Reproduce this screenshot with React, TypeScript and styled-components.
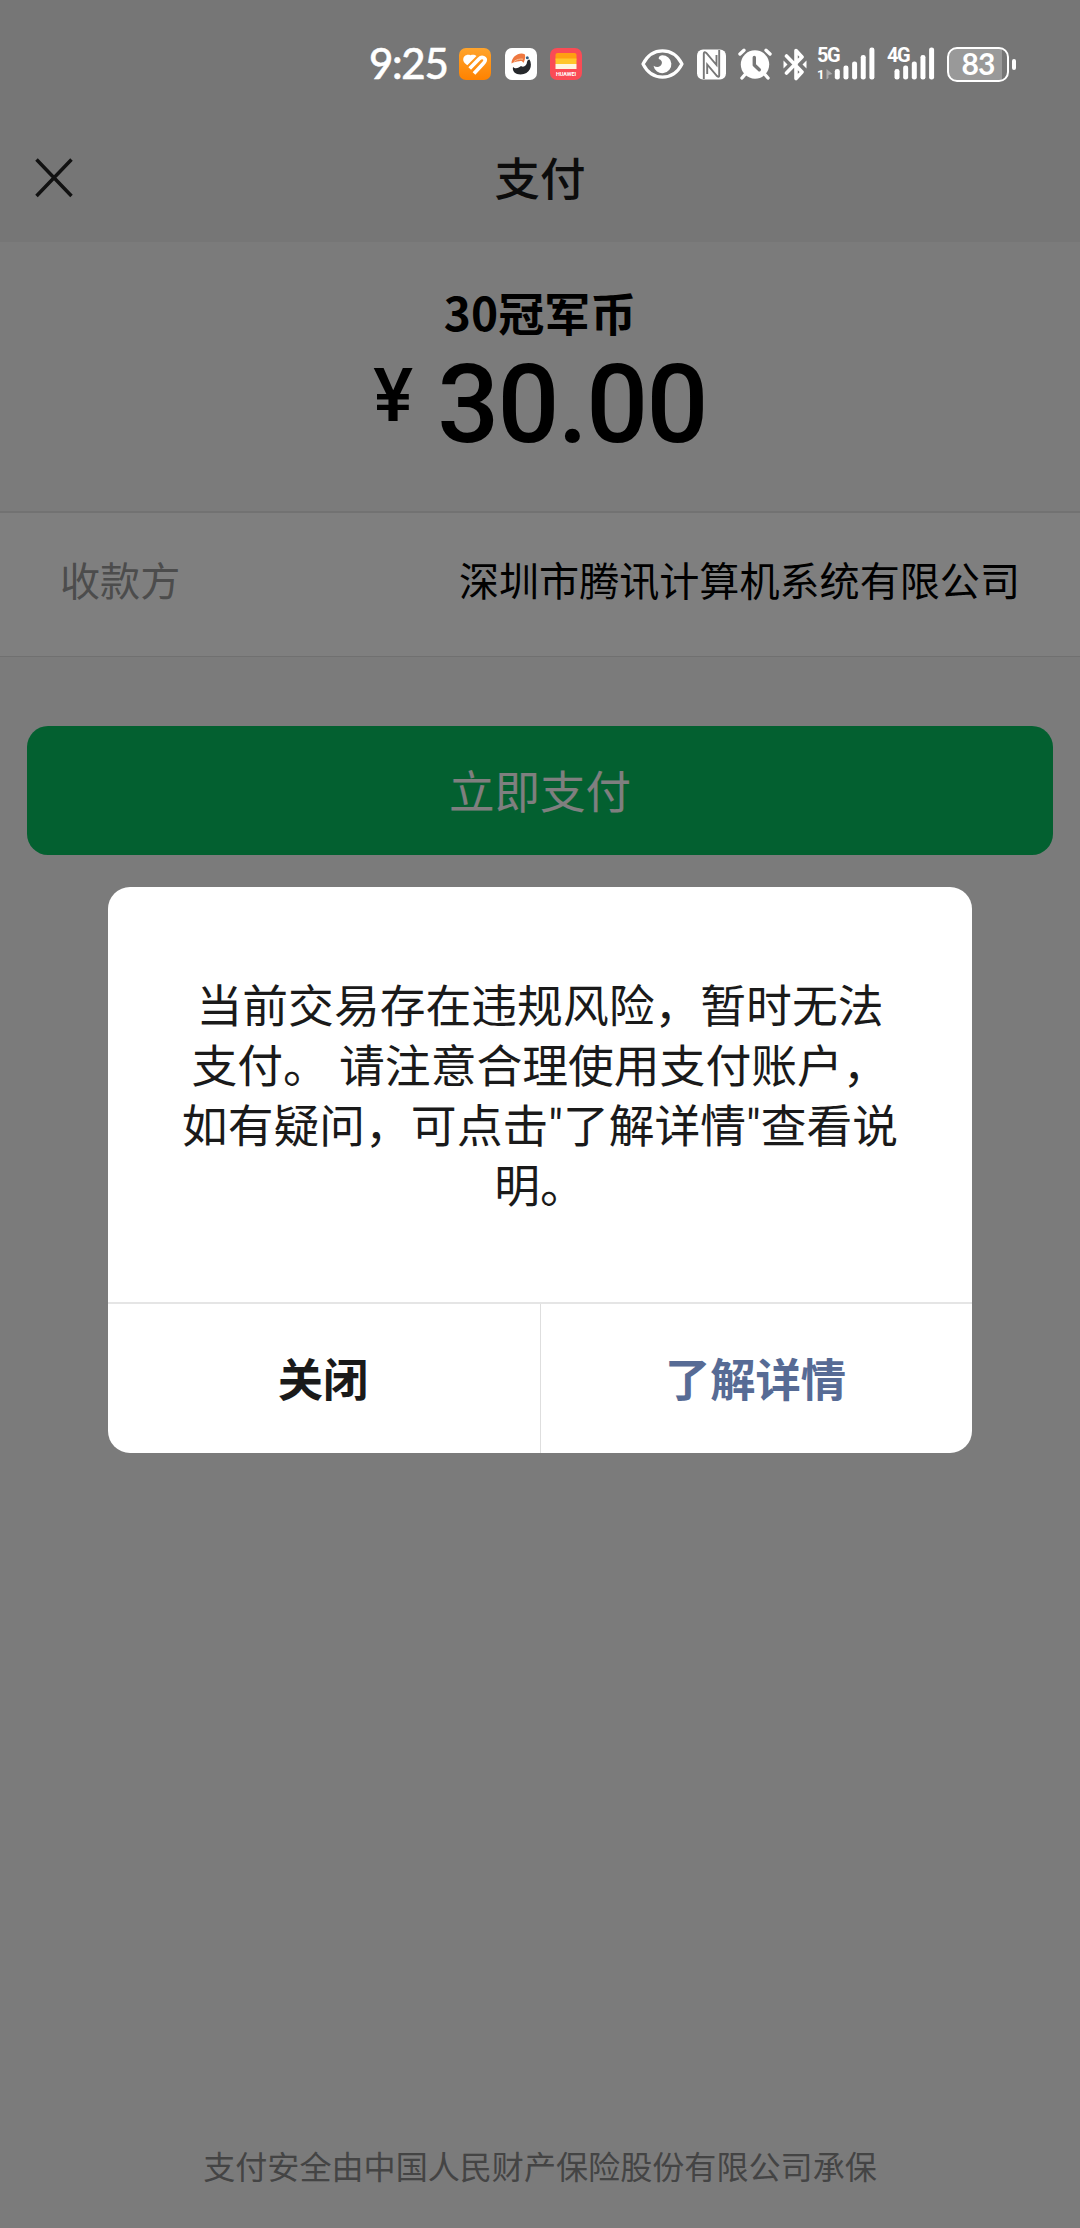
import React from 'react';
import styled, { createGlobalStyle } from 'styled-components';

const GlobalStyle = createGlobalStyle`
  * { box-sizing: border-box; }
  body { margin: 0; font-family: "Noto Sans CJK SC", "Liberation Sans", sans-serif; }
  button { font-family: inherit; border: 0; padding: 0; background: none; cursor: pointer; }
`;

const Screen = styled.div`
  position: relative;
  display: flex;
  flex-direction: column;
  width: 1080px;
  height: 2228px;
  overflow: hidden;
  background: #f7f7f7;
`;

const StatusBar = styled.div`
  position: relative;
  z-index: 2;
  display: flex;
  align-items: center;
  height: 128px;
  padding-left: 369px;
  color: #fff;
  svg { display: block; flex: none; }
`;

const Clock = styled.span`
  width: 90px;
  padding-bottom: 2px;
  font-family: Lato, Roboto, sans-serif;
  font-size: 42px;
  font-weight: 500;
  line-height: 48px;
  letter-spacing: -1.3px;
  -webkit-text-stroke: 0.5px #fff;
`;

const AppIcons = styled.div`
  display: flex;
  gap: 13.5px;
  width: 182px;
`;

const SystemIcons = styled.div`
  display: flex;
  align-items: center;
`;

const Gap = styled.i<{ $w: number }>`
  width: ${(p) => p.$w}px;
`;

const Top = styled.div`
  background: #ededed;
  height: 242px;
`;

const NavBar = styled.header`
  display: grid;
  grid-template-columns: 110px 1fr 110px;
  align-items: center;
  height: 100px;
`;

const CloseButton = styled.button`
  display: flex;
  padding-left: 34px;
`;

const Title = styled.h1`
  margin: 0;
  padding-bottom: 5px;
  text-align: center;
  font-size: 45.5px;
  font-weight: 500;
  line-height: 64px;
  color: #181818;
`;

const Summary = styled.section`
  display: flex;
  flex-direction: column;
  align-items: center;
  height: 269px;
  padding-top: 40px;
`;

const Product = styled.div`
  font-size: 46px;
  font-weight: 700;
  line-height: 58px;
`;

const Amount = styled.div`
  display: flex;
  align-items: flex-start;
  gap: 24px;
  padding-top: 9px;
  font-family: Roboto, sans-serif;
  font-weight: 500;
`;

const Currency = styled.span`
  padding-top: 7px;
  font-size: 75px;
  line-height: 78px;
`;

const Figure = styled.span`
  font-size: 109px;
  line-height: 112px;
  letter-spacing: -1.7px;
`;

const PayeeRow = styled.section`
  display: flex;
  align-items: center;
  justify-content: space-between;
  height: 146px;
  padding: 0 60px 11px;
  border-top: 2px solid #e5e5e5;
  border-bottom: 1px solid #e0e0e0;
  background: #fff;
  font-size: 40.1px;
  line-height: 60px;
`;

const Label = styled.span`
  color: #999;
`;

const PayButton = styled.button`
  height: 129px;
  margin: 69px 27px 0;
  padding-bottom: 4px;
  border-radius: 21px;
  background: #07c160;
  color: #fff;
  font-size: 45.5px;
`;

const Footer = styled.footer`
  margin-top: auto;
  padding-bottom: 39px;
  text-align: center;
  font-size: 32.1px;
  line-height: 48px;
  color: #888;
`;

const Mask = styled.div`
  position: absolute;
  inset: 0;
  z-index: 1;
  display: flex;
  justify-content: center;
  align-items: flex-start;
  padding-top: 887px;
  background: rgba(0, 0, 0, 0.5);
`;

const Dialog = styled.div`
  width: 864px;
  height: 566px;
  display: flex;
  flex-direction: column;
  border-radius: 22px;
  background: #fff;
  overflow: hidden;
`;

const Message = styled.div`
  flex: 1;
  padding-top: 86px;
  text-align: center;
  white-space: pre;
  font-size: 45.8px;
  line-height: 60px;
  color: #1a1a1a;
`;

const Line = styled.div`
  height: 60px;
`;

const Quote = styled.span`
  font-family: Roboto, sans-serif;
`;

const Actions = styled.div`
  display: grid;
  grid-template-columns: 1fr 1fr;
  height: 151px;
  border-top: 2px solid #e5e5e5;
`;

const Action = styled.button<{ $primary?: boolean }>`
  padding: 0 2px 4px 0;
  font-size: 45.3px;
  font-weight: 700;
  color: ${(p) => (p.$primary ? '#576b95' : '#1a1a1a')};
  & + & { border-left: 1px solid #dedede; }
`;

const Network = styled.div`
  position: relative;
  height: 34px;
`;

const NetworkName = styled.span`
  position: absolute;
  left: -1px;
  top: -2px;
  font-family: Roboto, sans-serif;
  font-size: 20px;
  font-weight: 700;
  line-height: 20px;
  letter-spacing: -1.5px;
`;

const SimIndex = styled(NetworkName)`
  top: 21px;
  font-size: 13px;
  line-height: 14px;
`;

const Battery = styled.div`
  display: flex;
  align-items: center;
  gap: 3px;
  &::after {
    content: '';
    width: 4px;
    height: 11px;
    border-radius: 2px;
    background: #fff;
  }
`;

const BatteryBody = styled.div`
  display: flex;
  align-items: center;
  justify-content: center;
  width: 62px;
  height: 35px;
  padding-bottom: 3px;
  border: 2.5px solid #fff;
  border-radius: 10px;
  background: linear-gradient(90deg, #999 91%, transparent 91%);
  font-family: Lato, Roboto, sans-serif;
  font-size: 30px;
  font-weight: 700;
  line-height: 30px;
  letter-spacing: -0.8px;
`;

const HealthIcon = () => (
  <svg width="32" height="32" viewBox="0 0 32 32">
    <defs>
      <linearGradient id="health" x1="0" y1="0" x2="0" y2="1">
        <stop offset="0" stopColor="#ffa42c" />
        <stop offset="1" stopColor="#ff8200" />
      </linearGradient>
    </defs>
    <rect width="32" height="32" rx="7" fill="url(#health)" />
    <path d="M4.300 12.500C3.700 8 8 5.800 11.500 7.300c2-.8 4.500-.6 6 .7L8.300 17.200C6.200 15.500 4.700 14.500 4.300 12.500Z" fill="#fff" />
    <path d="M10.700 20.500 20 11c3-3 7-1 6 2-.3 1-1 1.800-1.700 2.500L15 25.500" fill="none" stroke="#fff" strokeWidth="3.700" strokeLinejoin="round" />
  </svg>
);

const ToucanIcon = () => (
  <svg width="32" height="32" viewBox="0 0 32 32">
    <rect width="32" height="32" rx="7" fill="#fff" />
    <path d="M24.500 11.500c3.500 6 .5 15-9 15-5 0-8.500-3-7.500-7.500 2.500 2.500 6 .8 8-1 2.500 2 6-.5 6-4 .2-1.200 1-2.300 2.500-2.500Z" fill="#26282c" />
    <path d="M6.500 15.500C6.500 8.500 14.500 3.500 20 6.500c.5 3-.3 6.500-1.700 8.500-.8-1.800-2-2.300-4-1.700-3 .2-5.300.9-7.800 2.200Z" fill="#ee7840" />
    <path d="M9 13.500c3-2.200 6-2.700 9-2.300" fill="none" stroke="#f7c19a" strokeWidth="1" />
    <circle cx="22.300" cy="9.800" r="1.500" fill="#345f85" />
  </svg>
);

const WalletIcon = () => (
  <svg width="32" height="32" viewBox="0 0 32 32">
    <rect width="32" height="32" rx="7" fill="#fa4b55" />
    <path d="M5.500 7q0-2 2-2h17q2 0 2 2v5h-21Z" fill="#ff9f12" />
    <path d="M5.500 10.500h21V16h-21Z" fill="#ffc62b" />
    <path d="M5.500 16h21v5h-21Z" fill="#fff6df" />
    <text x="16" y="28.300" textAnchor="middle" textLength="20" fontFamily="Roboto, sans-serif" fontSize="5.500" fontWeight="700" fill="#fff">HUAWEI</text>
  </svg>
);

const EyeIcon = () => (
  <svg width="43" height="30" viewBox="0 0 43 30">
    <path d="M2 15C11-2.500 32-2.500 41 15 32 32.500 11 32.500 2 15Z" fill="none" stroke="#fff" strokeWidth="3.200" strokeLinejoin="round" />
    <path d="M21 6.200a9 9 0 1 1-8.500 10.500c4 2.600 7.500.8 8.300-2.200.5-2-.5-3.500-3-4.500-.5-2 .8-3.500 3.200-3.800Z" fill="#fff" />
  </svg>
);

const NfcIcon = () => (
  <svg width="29" height="31" viewBox="0 0 29 31">
    <rect x="0" y="0.500" width="29" height="30" rx="6" fill="#fff" />
    <path d="M6.800 30V4.500Q7 2 9.300 4L19.500 16V6M22.200 1v25.500q0 2.500-2.200.5L10.200 15.500V25" fill="none" stroke="#777" strokeWidth="1.900" />
  </svg>
);

const AlarmIcon = () => (
  <svg width="34" height="32" viewBox="0 0 34 32">
    <g fill="none" stroke="#fff" strokeWidth="3.400" strokeLinecap="round">
      <path d="m2 6 4-3.700M32 6l-4-3.700M7 26.500l-3 3.500M27 26.500l3 3.500" />
    </g>
    <circle cx="17" cy="16.500" r="14.200" fill="#fff" />
    <path d="M16.300 9.500V17l5 4.800" fill="none" stroke="#777" strokeWidth="3.400" strokeLinecap="round" strokeLinejoin="round" />
  </svg>
);

const BluetoothIcon = () => (
  <svg width="24" height="33" viewBox="0 0 24 33">
    <path d="m3.500 8 15.500 16-6 6.500V2.500l6 6.500L3.500 25" fill="none" stroke="#fff" strokeWidth="3.600" strokeLinecap="round" strokeLinejoin="round" />
    <path d="m.5 12.500 4 4-4 4ZM23.500 12.500l-4 4 4 4Z" fill="#fff" />
  </svg>
);

const BAR_TOPS = [22, 18.5, 14.5, 8, 0.5];

const Bars = ({ offset, width }: { offset: number; width: number }) => (
  <svg width={width} height="34" viewBox={`0 0 ${width} 34`}>
    {BAR_TOPS.map((top, i) => (
      <rect key={top} x={offset + i * 8.65} y={top} width="5" height={32.5 - top} rx="2.300" fill="#fff" />
    ))}
    {width > 55 && <path d="M8.500 22v10.500l2-1.500v-3l4-1Z" fill="#aaa" />}
  </svg>
);

export default function App() {
  return (
    <Screen>
      <GlobalStyle />
      <Top>
        <StatusBar>
          <Clock>9:25</Clock>
          <AppIcons>
            <HealthIcon />
            <ToucanIcon />
            <WalletIcon />
          </AppIcons>
          <SystemIcons>
            <EyeIcon />
            <Gap $w={13} />
            <NfcIcon />
            <Gap $w={12} />
            <AlarmIcon />
            <Gap $w={11} />
            <BluetoothIcon />
            <Gap $w={11} />
            <Network>
              <Bars offset={16.8} width={58} />
              <NetworkName>5G</NetworkName>
              <SimIndex>1</SimIndex>
            </Network>
            <Gap $w={12} />
            <Network>
              <Bars offset={6.5} width={47} />
              <NetworkName>4G</NetworkName>
            </Network>
            <Gap $w={12} />
            <Battery>
              <BatteryBody>83</BatteryBody>
            </Battery>
          </SystemIcons>
        </StatusBar>
        <NavBar>
          <CloseButton aria-label="关闭">
            <svg width="40" height="40" viewBox="0 0 40 40">
              <path d="m2.500 1.500 35 36.500M37.500 1.500 2.500 38" stroke="#222" strokeWidth="3.500" />
            </svg>
          </CloseButton>
          <Title>支付</Title>
        </NavBar>
      </Top>
      <Summary>
        <Product>30冠军币</Product>
        <Amount>
          <Currency>¥</Currency>
          <Figure>30.00</Figure>
        </Amount>
      </Summary>
      <PayeeRow>
        <Label>收款方</Label>
        <span>深圳市腾讯计算机系统有限公司</span>
      </PayeeRow>
      <PayButton>立即支付</PayButton>
      <Footer>支付安全由中国人民财产保险股份有限公司承保</Footer>
      <Mask>
        <Dialog role="dialog">
          <Message>
            <Line>当前交易存在违规风险，暂时无法</Line>
            <Line>支付。 请注意合理使用支付账户，</Line>
            <Line>
              如有疑问，可点击<Quote>"</Quote>了解详情<Quote>"</Quote>查看说
            </Line>
            <Line>明。</Line>
          </Message>
          <Actions>
            <Action>关闭</Action>
            <Action $primary>了解详情</Action>
          </Actions>
        </Dialog>
      </Mask>
    </Screen>
  );
}
